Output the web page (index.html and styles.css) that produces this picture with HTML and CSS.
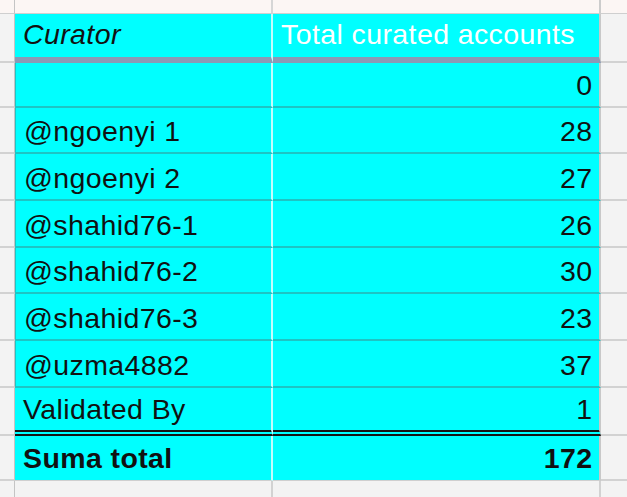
FILE: index.html
```html
<!DOCTYPE html>
<html>
<head>
<meta charset="utf-8">
<link rel="stylesheet" href="styles.css">
</head>
<body>
<div class="sheet">
  <div class="row top">
    <div class="gut"></div><div class="c1"></div><div class="c2"></div><div class="out"></div>
  </div>
  <div class="row head">
    <div class="gut"></div>
    <div class="c1 cell"><span class="t italic">Curator</span></div>
    <div class="c2 cell"><span class="t white">Total curated accounts</span></div>
    <div class="out"></div>
  </div>
  <div class="row data first">
    <div class="gut"></div>
    <div class="c1 cell"><span class="t"></span></div>
    <div class="c2 cell num"><span class="t">0</span></div>
    <div class="out"></div>
  </div>
  <div class="row data">
    <div class="gut"></div>
    <div class="c1 cell"><span class="t">@ngoenyi 1</span></div>
    <div class="c2 cell num"><span class="t">28</span></div>
    <div class="out"></div>
  </div>
  <div class="row data">
    <div class="gut"></div>
    <div class="c1 cell"><span class="t">@ngoenyi 2</span></div>
    <div class="c2 cell num"><span class="t">27</span></div>
    <div class="out"></div>
  </div>
  <div class="row data">
    <div class="gut"></div>
    <div class="c1 cell"><span class="t">@shahid76-1</span></div>
    <div class="c2 cell num"><span class="t">26</span></div>
    <div class="out"></div>
  </div>
  <div class="row data">
    <div class="gut"></div>
    <div class="c1 cell"><span class="t">@shahid76-2</span></div>
    <div class="c2 cell num"><span class="t">30</span></div>
    <div class="out"></div>
  </div>
  <div class="row data">
    <div class="gut"></div>
    <div class="c1 cell"><span class="t">@shahid76-3</span></div>
    <div class="c2 cell num"><span class="t">23</span></div>
    <div class="out"></div>
  </div>
  <div class="row data">
    <div class="gut"></div>
    <div class="c1 cell"><span class="t">@uzma4882</span></div>
    <div class="c2 cell num"><span class="t">37</span></div>
    <div class="out"></div>
  </div>
  <div class="row validated">
    <div class="gut"></div>
    <div class="c1 cell"><span class="t">Validated By</span></div>
    <div class="c2 cell num"><span class="t">1</span></div>
    <div class="out"></div>
  </div>
  <div class="row total">
    <div class="gut"></div>
    <div class="c1 cell"><span class="t">Suma total</span></div>
    <div class="c2 cell num"><span class="t">172</span></div>
    <div class="out"></div>
  </div>
  <div class="row filler">
    <div class="gut"></div><div class="c1"></div><div class="c2"></div><div class="out"></div>
  </div>
</div>
</body>
</html>
```
FILE: styles.css
```css
html, body {
  margin: 0;
  padding: 0;
  background: #f3f3f3;
}
.sheet {
  width: 627px;
  height: 497px;
  overflow: hidden;
  font-family: "Liberation Sans", Arial, sans-serif;
  font-size: 28.5px;
  letter-spacing: 0.4px;
  color: #111;
}
.row {
  display: grid;
  grid-template-columns: 15px 258px 328px 26px;
  box-sizing: border-box;
}
.row > div {
  box-sizing: border-box;
}
.gut {
  background: #f3f3f3;
  border-right: 1px solid #c4c4c4;
  border-bottom: 2px solid #d2d2d2;
}
.out {
  background: #f3f3f3;
  border-bottom: 2px solid #d2d2d2;
}
.c1 {
  border-right: 2px solid #c4fcfc;
}
.c2 {
  border-right: 2px solid #c8c8c8;
}
.cell {
  background: #00ffff;
  display: flex;
  align-items: flex-end;
  line-height: 32px;
  padding: 0 6.6px 4.9px 8px;
  white-space: nowrap;
}
.num {
  justify-content: flex-end;
}
.top {
  height: 14px;
}
.top > div {
  background: #fcf6f4;
  border-bottom: 1px solid #cfcfcf;
}
.top .c1 {
  border-right: 2px solid #d6d6d6;
}
.top .c2 {
  border-right: 2px solid #cccccc;
}
.head {
  height: 49px;
}
.head .cell {
  border-bottom: 6px solid #8a99b5;
  padding-bottom: 6.9px;
}
.italic {
  font-style: italic;
}
.white {
  color: #ffffff;
}
.data {
  height: 46.67px;
}
.data.first {
  height: 44.7px;
}
.data .cell {
  border-bottom: 2px solid #1ec4c4;
}
.data .c1 {
  border-left: 1px solid #1ec4c4;
}
.validated {
  height: 48.3px;
}
.validated .cell {
  border-bottom: 6px double #161616;
  padding-bottom: 4.6px;
}
.total {
  height: 45px;
  font-weight: bold;
}
.total .cell {
  border-bottom: 1px solid #cfcfcf;
  padding-bottom: 5.6px;
}
.filler {
  height: 20px;
}
.filler > div {
  background: #f3f3f3;
  border-bottom: none;
}
.filler .c1 {
  border-right: 2px solid #d2d2d2;
}
.filler .c2 {
  border-right: 2px solid #d2d2d2;
}
```
